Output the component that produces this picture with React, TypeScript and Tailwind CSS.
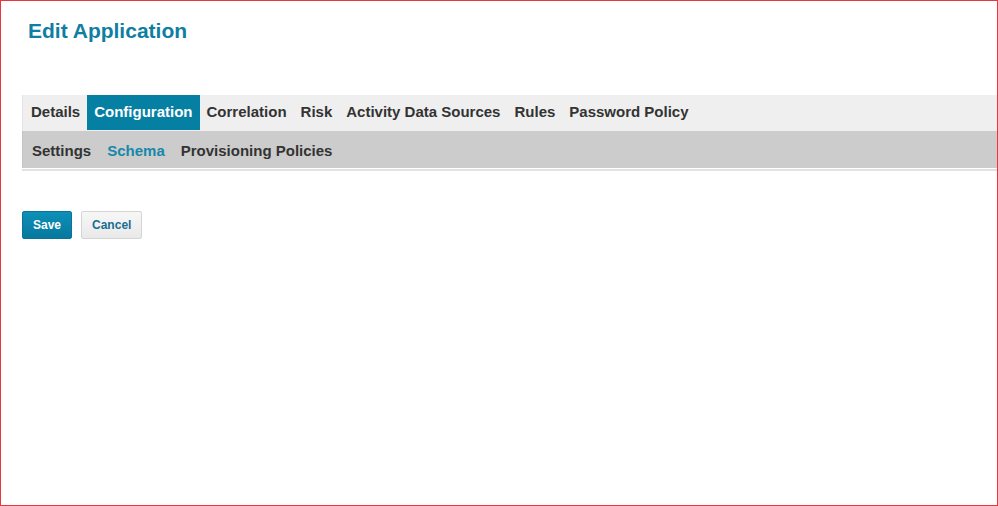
import React from "react";

const tabs = [
  "Details",
  "Configuration",
  "Correlation",
  "Risk",
  "Activity Data Sources",
  "Rules",
  "Password Policy",
];

const subTabs = ["Settings", "Schema", "Provisioning Policies"];

export default function App() {
  return (
    <div
      className="box-border h-[506px] w-[998px] border border-[#e8383d] bg-white pl-[21px]"
      style={{ fontFamily: '"Liberation Sans", Arial, sans-serif' }}
    >
      <h1 className="ml-[6px] mt-[18px] text-[21px] font-bold leading-[24px] text-[#0f7ea2]">
        Edit Application
      </h1>

      <div className="mt-[52px]">
        {/* main tabs */}
        <div className="flex h-[36px] items-start border-l border-[#e4e4e4] bg-[#efefef] pl-[1px]">
          {tabs.map((t) => (
            <div
              key={t}
              className={
                t === "Configuration"
                  ? "flex h-[35px] items-center bg-[#057fa2] px-[7px] text-[15px] font-bold text-white"
                  : "flex h-[35px] items-center px-[7px] text-[15px] font-bold text-[#333333]"
              }
            >
              {t}
            </div>
          ))}
        </div>

        {/* sub tabs */}
        <div className="flex h-[37px] items-center border-l border-[#c4c4c4] bg-[#cccccc] pl-[1px] pt-[4px]">
          {subTabs.map((t) => (
            <div
              key={t}
              className={
                t === "Schema"
                  ? "px-[8px] text-[15px] font-bold text-[#1788ab]"
                  : "px-[8px] text-[15px] font-bold text-[#333333]"
              }
            >
              {t}
            </div>
          ))}
        </div>
        <div className="mt-[1px] h-[2px] bg-[#e2e2e2]" />
      </div>

      <div className="mt-[40px] flex gap-[9px]">
        <button className="h-[28px] rounded-[2px] border border-[#0a7396] bg-gradient-to-b from-[#0c90b8] to-[#08789e] px-[10px] text-[12px] font-bold text-white">
          Save
        </button>
        <button className="h-[28px] rounded-[2px] border border-[#d4d4d4] bg-gradient-to-b from-[#f7f7f7] to-[#e9e9e9] px-[10px] text-[12px] font-bold text-[#1a6d92]">
          Cancel
        </button>
      </div>
    </div>
  );
}
